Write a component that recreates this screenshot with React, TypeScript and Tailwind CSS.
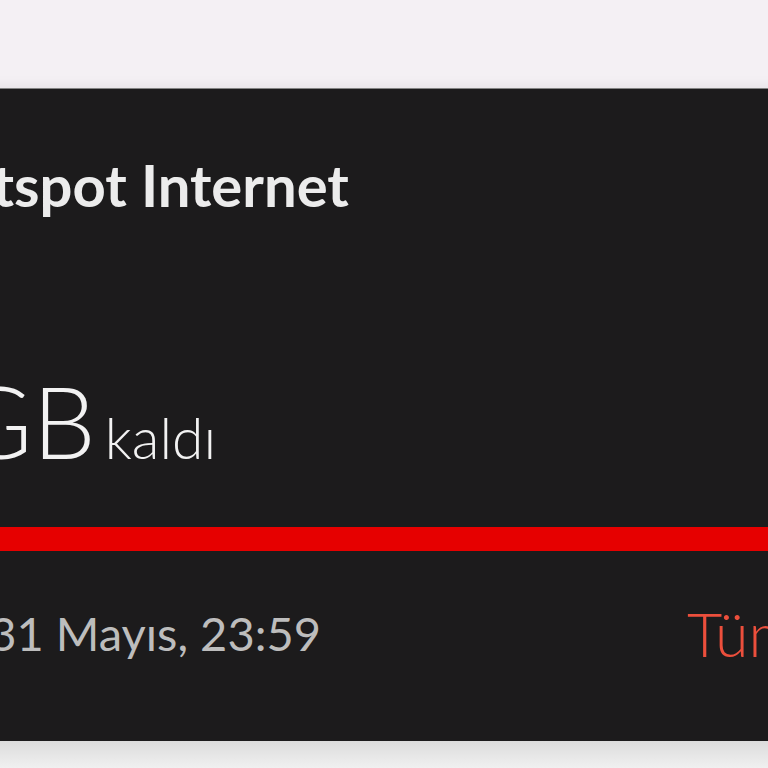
export default function App() {
  return (
    <div className="h-[768px] w-[768px] overflow-hidden bg-[#f4f0f4] font-['Lato','Liberation_Sans',sans-serif]">
      <div className="h-[89px] border-b border-[#8a8a8a]" />
      {/* card runs off both edges of the crop */}
      <div className="-ml-[120px] w-[1100px] h-[652px] bg-[#1c1b1c] pl-[36px] pt-[61px] shadow-[0_6px_18px_rgba(0,0,0,0.18)]">
        <h2 className="text-[58px] font-bold leading-[1.2] text-[#ececec] whitespace-nowrap">Hotspot Internet</h2>

        <div className="mt-[150px] -ml-[15px] flex items-baseline whitespace-nowrap text-[#f2f2f2]">
          <span className="text-[100px] font-light leading-none">1GB</span>
          <span className="ml-[9px] text-[57px] font-light leading-none">kaldı</span>
        </div>

        <div className="mt-[57px] h-[24px] w-full bg-[#e60000]" />

        <div className="mt-[52px] -ml-[41px] flex items-center whitespace-nowrap">
          <span className="text-[47px] font-normal leading-none text-[#bdbdbd]">Bitiş: 31 Mayıs, 23:59</span>
          <span className="ml-[366px] text-[61px] font-light leading-none text-[#ec4f3c]">Tümünü gör</span>
        </div>
      </div>
      <div className="h-[27px] bg-gradient-to-b from-[#dcdcdc] to-[#f0f0f0]" />
    </div>
  );
}
